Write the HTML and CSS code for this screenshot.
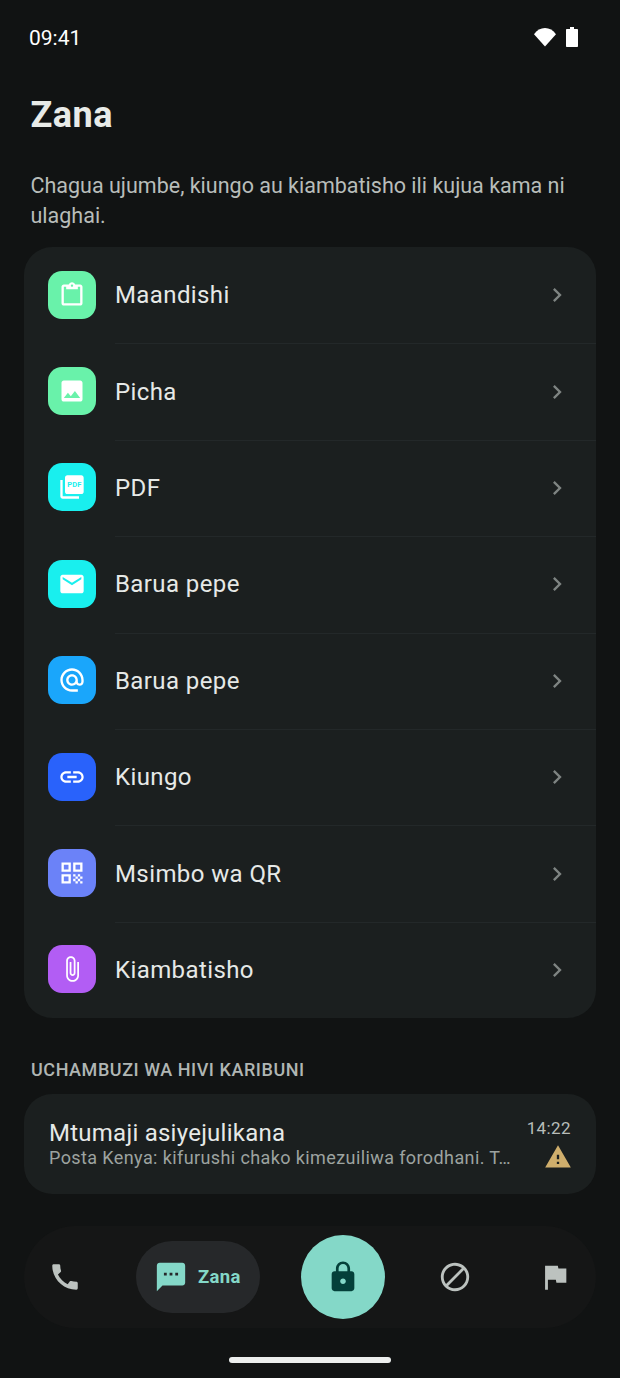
FILE: index.html
```html
<!DOCTYPE html>
<html>
<head>
    <meta name="viewport" content="width=device-width, initial-scale=1">
    <title>Zana</title>
    <link rel="stylesheet" href="styles.css">
</head>
<body>
    <div class="status-bar">
        <span class="time">09:41</span>
        <div class="status-icons">
            <svg class="wifi" viewBox="0 0 24 20"><path d="M12 19.500 1 7.200C3.900 3.200 7.700 1 12 1s8.100 2.200 11 6.200z"/></svg>
            <svg class="battery" viewBox="0 0 12 20"><path d="M4 0h4v2h3c.6 0 1 .4 1 1v16c0 .6-.4 1-1 1H1c-.6 0-1-.4-1-1V3c0-.6.4-1 1-1h3z"/></svg>
        </div>
    </div>

    <h1>Zana</h1>
    <p class="intro">Chagua ujumbe, kiungo au kiambatisho ili kujua kama ni ulaghai.</p>

    <ul class="tools">
        <li>
            <span class="tile green"><svg viewBox="0 0 24 24"><path d="M19 3h-4.180C14.400 1.840 13.300 1 12 1c-1.300 0-2.400.84-2.820 2H5c-1.100 0-2 .9-2 2v14c0 1.100.9 2 2 2h14c1.100 0 2-.9 2-2V5c0-1.100-.9-2-2-2zm-7 0c.55 0 1 .45 1 1s-.45 1-1 1-1-.45-1-1 .45-1 1-1zm7 16H5V5h2v2h10V5h2v14z"/></svg></span>
            <span class="label">Maandishi</span>
            <svg class="chevron" viewBox="0 0 24 24"><path d="M10 6 8.590 7.410 13.170 12l-4.580 4.590L10 18l6-6z"/></svg>
        </li>
        <li>
            <span class="tile green"><svg viewBox="0 0 24 24"><path d="M21 19V5c0-1.100-.9-2-2-2H5c-1.100 0-2 .9-2 2v14c0 1.100.9 2 2 2h14c1.100 0 2-.9 2-2zM8.500 13.500l2.500 3.010L14.500 12l4.500 6H5l3.500-4.500z"/></svg></span>
            <span class="label">Picha</span>
            <svg class="chevron" viewBox="0 0 24 24"><path d="M10 6 8.590 7.410 13.170 12l-4.580 4.590L10 18l6-6z"/></svg>
        </li>
        <li>
            <span class="tile cyan"><svg viewBox="0 0 24 24"><path d="M20 2H8c-1.100 0-2 .9-2 2v12c0 1.100.9 2 2 2h12c1.100 0 2-.9 2-2V4c0-1.100-.9-2-2-2zM4 6H2v14c0 1.100.9 2 2 2h14v-2H4z"/><text class="pdf-mark" x="14" y="12.400">PDF</text></svg></span>
            <span class="label">PDF</span>
            <svg class="chevron" viewBox="0 0 24 24"><path d="M10 6 8.590 7.410 13.170 12l-4.580 4.590L10 18l6-6z"/></svg>
        </li>
        <li>
            <span class="tile cyan"><svg viewBox="0 0 24 24"><path d="M20 4H4c-1.100 0-1.990.9-1.990 2L2 18c0 1.100.9 2 2 2h16c1.100 0 2-.9 2-2V6c0-1.100-.9-2-2-2zm0 4-8 5-8-5V6l8 5 8-5z"/></svg></span>
            <span class="label">Barua pepe</span>
            <svg class="chevron" viewBox="0 0 24 24"><path d="M10 6 8.590 7.410 13.170 12l-4.580 4.590L10 18l6-6z"/></svg>
        </li>
        <li>
            <span class="tile sky"><svg viewBox="0 0 24 24"><path d="M12 2C6.480 2 2 6.480 2 12s4.480 10 10 10h5v-2h-5c-4.340 0-8-3.660-8-8s3.660-8 8-8 8 3.660 8 8v1.430c0 .79-.71 1.570-1.500 1.570s-1.500-.78-1.500-1.570V12c0-2.760-2.240-5-5-5s-5 2.240-5 5 2.240 5 5 5c1.380 0 2.640-.56 3.540-1.470.65.89 1.770 1.470 2.960 1.470 1.970 0 3.500-1.600 3.500-3.570V12c0-5.520-4.480-10-10-10zm0 13c-1.660 0-3-1.340-3-3s1.340-3 3-3 3 1.340 3 3-1.340 3-3 3z"/></svg></span>
            <span class="label">Barua pepe</span>
            <svg class="chevron" viewBox="0 0 24 24"><path d="M10 6 8.590 7.410 13.170 12l-4.580 4.590L10 18l6-6z"/></svg>
        </li>
        <li>
            <span class="tile blue"><svg viewBox="0 0 24 24"><path d="M3.900 12c0-1.710 1.390-3.100 3.100-3.100h4V7H7c-2.760 0-5 2.240-5 5s2.240 5 5 5h4v-1.900H7c-1.710 0-3.100-1.390-3.100-3.100zM8 13h8v-2H8zm9-6h-4v1.900h4c1.710 0 3.100 1.390 3.100 3.100s-1.390 3.100-3.100 3.100h-4V17h4c2.760 0 5-2.240 5-5s-2.240-5-5-5z"/></svg></span>
            <span class="label">Kiungo</span>
            <svg class="chevron" viewBox="0 0 24 24"><path d="M10 6 8.590 7.410 13.170 12l-4.580 4.590L10 18l6-6z"/></svg>
        </li>
        <li>
            <span class="tile indigo"><svg viewBox="0 0 24 24"><path d="M3 11h8V3H3zm2-6h4v4H5zM3 21h8v-8H3zm2-6h4v4H5zM13 3v8h8V3zm6 6h-4V5h4zM19 19h2v2h-2zM13 13h2v2h-2zM15 15h2v2h-2zM13 17h2v2h-2zM15 19h2v2h-2zM17 17h2v2h-2zM17 13h2v2h-2zM19 15h2v2h-2z"/></svg></span>
            <span class="label">Msimbo wa QR</span>
            <svg class="chevron" viewBox="0 0 24 24"><path d="M10 6 8.590 7.410 13.170 12l-4.580 4.590L10 18l6-6z"/></svg>
        </li>
        <li>
            <span class="tile purple"><svg viewBox="0 0 24 24"><path d="M16.500 6v11.500c0 2.210-1.790 4-4 4s-4-1.790-4-4V5c0-1.380 1.120-2.500 2.500-2.500s2.500 1.120 2.500 2.500v10.500c0 .55-.45 1-1 1s-1-.45-1-1V6H10v9.500c0 1.380 1.120 2.500 2.500 2.500s2.500-1.120 2.500-2.500V5c0-2.210-1.790-4-4-4S7 2.790 7 5v12.500c0 3.040 2.460 5.500 5.500 5.500s5.500-2.460 5.500-5.500V6z"/></svg></span>
            <span class="label">Kiambatisho</span>
            <svg class="chevron" viewBox="0 0 24 24"><path d="M10 6 8.590 7.410 13.170 12l-4.580 4.590L10 18l6-6z"/></svg>
        </li>
    </ul>

    <h2>UCHAMBUZI WA HIVI KARIBUNI</h2>

    <div class="recent">
        <div class="recent-text">
            <div class="sender">Mtumaji asiyejulikana</div>
            <div class="preview">Posta Kenya: kifurushi chako kimezuiliwa forodhani. T…</div>
        </div>
        <div class="recent-meta">
            <span class="recent-time">14:22</span>
            <svg class="warning" viewBox="0 0 24 24"><path d="M1 21h22L12 2zm12-3h-2v-2h2zm0-4h-2v-4h2z"/></svg>
        </div>
    </div>

    <nav class="bottom-nav">
        <svg class="nav-icon phone" viewBox="0 0 24 24"><path d="M20.010 15.380c-1.230 0-2.420-.2-3.530-.56-.35-.12-.74-.03-1.010.24l-1.570 1.970c-2.830-1.350-5.480-3.900-6.890-6.830l1.950-1.660c.27-.28.35-.67.24-1.020-.37-1.110-.56-2.300-.56-3.530 0-.54-.45-.99-.99-.99H4.190C3.650 3 3 3.240 3 3.990 3 13.280 10.730 21 20.010 21c.71 0 .99-.63.99-1.180v-3.450c0-.54-.45-.99-.99-.99z"/></svg>
        <div class="nav-pill">
            <svg class="nav-icon chat" viewBox="0 0 24 24"><path d="M20 2H4c-1.100 0-1.990.9-1.990 2L2 22l4-4h14c1.100 0 2-.9 2-2V4c0-1.100-.9-2-2-2zM9 11H7V9h2zm4 0h-2V9h2zm4 0h-2V9h2z"/></svg>
            <span>Zana</span>
        </div>
        <div class="fab">
            <svg class="nav-icon lock" viewBox="0 0 24 24"><path d="M18 8h-1V6c0-2.760-2.240-5-5-5S7 3.240 7 6v2H6c-1.100 0-2 .9-2 2v10c0 1.100.9 2 2 2h12c1.100 0 2-.9 2-2V10c0-1.100-.9-2-2-2zm-6 9c-1.100 0-2-.9-2-2s.9-2 2-2 2 .9 2 2-.9 2-2 2zm3.100-9H8.900V6c0-1.710 1.390-3.100 3.100-3.100 1.710 0 3.100 1.390 3.100 3.100z"/></svg>
        </div>
        <svg class="nav-icon block" viewBox="0 0 24 24"><path d="M12 2C6.480 2 2 6.480 2 12s4.480 10 10 10 10-4.480 10-10S17.520 2 12 2zM4 12c0-4.420 3.580-8 8-8 1.850 0 3.550.63 4.900 1.690L5.690 16.900C4.630 15.550 4 13.850 4 12zm8 8c-1.850 0-3.550-.63-4.900-1.690L18.310 7.100C19.370 8.450 20 10.150 20 12c0 4.420-3.580 8-8 8z"/></svg>
        <svg class="nav-icon flag" viewBox="0 0 24 24"><path d="M14.400 6 14 4H5v17h2v-7h5.600l.4 2h7V6z"/></svg>
    </nav>

    <div class="home-bar"></div>
</body>
</html>
```

FILE: styles.css
```css
* {
    box-sizing: border-box;
}

body {
    width: 620px;
    height: 1378px;
    margin: 0;
    padding: 0 24px;
    overflow: hidden;
    background-color: #111313;
    color: #e6e9e7;
    font-family: Roboto, sans-serif;
}

.status-bar {
    display: flex;
    align-items: center;
    justify-content: space-between;
    height: 24px;
    margin: 26px 0 0 5px;
    padding-right: 18px;
}

.time {
    font-size: 21px;
    color: #fff;
}

.status-icons {
    display: flex;
    align-items: center;
    gap: 9px;
    margin-top: -2px;
}

.status-icons svg {
    display: block;
    fill: #fff;
}

.wifi {
    width: 24px;
    height: 20px;
}

.battery {
    width: 12px;
    height: 20px;
}

h1 {
    margin: 40px 0 0 6.500px;
    font-size: 36px;
    line-height: 50px;
    font-weight: 700;
    letter-spacing: 0.5px;
    color: #e8ebe8;
}

.intro {
    margin: 31px 0 0 6.500px;
    font-size: 21.500px;
    line-height: 30px;
    color: #b8bdba;
}

.tools {
    list-style-type: none;
    margin: 16px 0 0;
    padding: 0;
    background-color: #1b1f1f;
    border-radius: 28px;
}

.tools li {
    position: relative;
    display: flex;
    align-items: center;
    height: 96.400px;
    padding: 0 24px;
}

.tools li + li::before {
    content: "";
    position: absolute;
    top: 0;
    left: 91px;
    right: 0;
    height: 1px;
    background-color: #232829;
}

.tile {
    display: flex;
    align-items: center;
    justify-content: center;
    width: 48px;
    height: 48px;
    margin-bottom: 1px;
    border-radius: 14px;
}

.tile svg {
    width: 28px;
    height: 28px;
    fill: #fff;
}

.green { background-color: #69f2aa; }
.cyan { background-color: #19efee; }
.sky { background-color: #1aa6fb; }
.blue { background-color: #2962fb; }
.indigo { background-color: #6b82f8; }
.purple { background-color: #b25df4; }

.pdf-mark {
    font-family: Roboto, sans-serif;
    font-size: 6.500px;
    font-weight: 700;
    text-anchor: middle;
    fill: #19efee;
}

.label {
    flex: 1;
    margin-left: 19px;
    font-size: 24px;
    letter-spacing: 0.4px;
    color: #e6e9e7;
}

.chevron {
    width: 28px;
    height: 28px;
    margin-right: 1px;
    fill: #7e8482;
}

h2 {
    margin: 40px 0 0 7px;
    font-size: 18px;
    line-height: 24px;
    font-weight: 500;
    letter-spacing: 0.55px;
    color: #b0b6b3;
}

.recent {
    display: flex;
    align-items: center;
    height: 100px;
    margin-top: 12px;
    padding: 0 25px;
    background-color: #1b1f1f;
    border-radius: 28px;
}

.recent-text {
    flex: 1;
    min-width: 0;
}

.sender {
    font-size: 24px;
    line-height: 28px;
    letter-spacing: 0.25px;
    color: #e6e9e7;
}

.preview {
    font-size: 18px;
    line-height: 22px;
    letter-spacing: 0.4px;
    white-space: nowrap;
    color: #9da3a0;
}

.recent-meta {
    display: flex;
    flex-direction: column;
    align-items: flex-end;
    gap: 4px;
}

.recent-time {
    font-size: 17px;
    line-height: 22px;
    letter-spacing: 0.4px;
    color: #b8bdba;
}

.warning {
    width: 28px;
    height: 28px;
    margin-right: -1px;
    fill: #cfae6c;
}

.bottom-nav {
    display: flex;
    align-items: center;
    height: 102px;
    margin-top: 32px;
    padding-left: 24px;
    background-color: #151616;
    border-radius: 51px;
}

.nav-icon {
    flex: none;
    width: 34px;
    height: 34px;
    fill: #bcc2bf;
}

.nav-pill {
    display: flex;
    align-items: center;
    gap: 10px;
    width: 124px;
    height: 72px;
    margin-left: 54px;
    padding-left: 18px;
    background-color: #26282a;
    border-radius: 36px;
    font-size: 18.500px;
    font-weight: 700;
    letter-spacing: 0.3px;
    color: #84d8c8;
}

.chat {
    fill: #84d8c8;
}

.fab {
    display: flex;
    align-items: center;
    justify-content: center;
    flex: none;
    width: 84px;
    height: 84px;
    margin-left: 41px;
    background-color: #84d8c8;
    border-radius: 50%;
}

.lock {
    fill: #04403a;
}

.block {
    margin-left: 53px;
}

.flag {
    margin-left: 66px;
}

.home-bar {
    width: 162px;
    height: 6px;
    margin: 29px auto 0;
    background-color: #eceeed;
    border-radius: 3px;
}
```
